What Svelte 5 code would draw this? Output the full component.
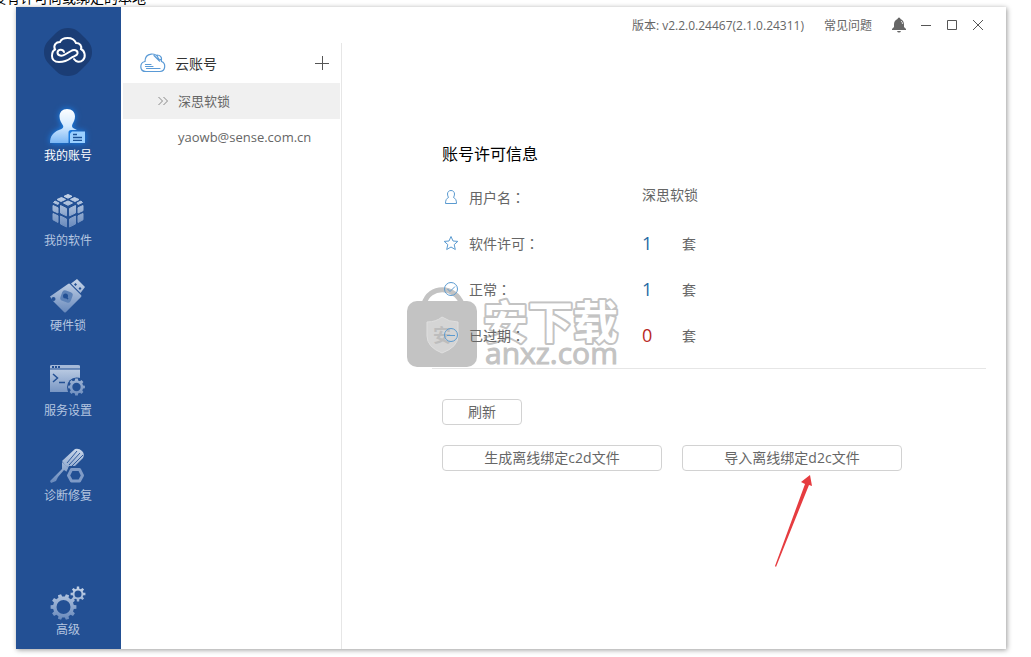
<script lang="ts">
  const nav = [
    { id: 'account', label: '我的账号' },
    { id: 'software', label: '我的软件' },
    { id: 'dongle', label: '硬件锁' },
    { id: 'service', label: '服务设置' },
    { id: 'repair', label: '诊断修复' },
  ];
  const accounts = ['深思软锁', 'yaowb@sense.com.cn'];
  const counts = [
    { icon: 'star', label: '软件许可', value: 1, late: false },
    { icon: 'check', label: '正常', value: 1, late: false },
    { icon: 'minus', label: '已过期', value: 0, late: true },
  ];
  let active = $state('account');
  let selected = $state(0);

  // Outline of a cog with square teeth around (cx, cy)
  function cog(cx: number, cy: number, outer: number, inner: number, hole: number, teeth: number) {
    const step = (Math.PI * 2) / teeth;
    let d = '';
    for (let i = 0; i < teeth; i++) {
      const a = i * step;
      for (const [k, r] of [[-0.3, inner], [-0.2, outer], [0.2, outer], [0.3, inner]]) {
        d += `${d ? 'L' : 'M'}${(cx + r * Math.cos(a + k * step)).toFixed(2)} ${(cy + r * Math.sin(a + k * step)).toFixed(2)}`;
      }
    }
    return `${d}ZM${cx + hole} ${cy}A${hole} ${hole} 0 1 0 ${cx - hole} ${cy}A${hole} ${hole} 0 1 0 ${cx + hole} ${cy}Z`;
  }
</script>

{#snippet navIcon(id: string)}
  <svg class="nav-icon" class:glow={id === 'account'} viewBox="0 0 36 36" aria-hidden="true">
    {#if id === 'account'}
      <path fill="url(#bright)" d="M17 1C22 1 25 4 25 8.500C25 12 23.500 14 22.500 16C21.500 18 22 19.500 24 20.500L27 22H21C19.500 22 18.500 23 18.500 24.500V35H0C0 28 3.500 24 9 22C12 21 14 20 13 17.500C11.500 14.500 9.500 12.500 9.500 8.500C9.500 4 12.500 1 17 1Z" />
      <path fill="#9bd0ff" d="M22 23.500H35V35H20V25.500Z" />
      <path stroke="#1c5296" stroke-width="1.300" d="M23 26.500H27M23 29.500H32M23 32.300H32" />
    {:else if id === 'software'}
      <g fill="url(#soft)" stroke="url(#soft)" stroke-width="1" stroke-linejoin="round">
        <path d="M18 1.500L22 3.300L18 5.200L14 3.300ZM11.500 4.500L15.500 6.400L11 8.500L7 6.500ZM24.500 4.500L29 6.500L25 8.500L20.500 6.400ZM18 8L22.500 10L18 12.300L13.500 10ZM5 8L9 10L8 11.500L3.500 9.500ZM31 8L32.500 9.500L28 11.500L27 10Z" />
        <path d="M3 12.500L8 14.800V20L3 17.700ZM10.500 12.500L16.500 15.500V22.800L10.500 20ZM33 12.500L28 14.800V20L33 17.700ZM25.500 12.500L19.500 15.500V22.800L25.500 20ZM3 20.500L8 22.800V29.500L3 26.800ZM10.500 23L16.500 26V34L10.500 31ZM33 20.500L28 22.800V29.500L33 26.800ZM25.500 23L19.500 26V34L25.500 31Z" />
      </g>
    {:else if id === 'dongle'}
      <path fill="url(#soft)" d="M18 6Q19 5 20 6L31 17Q32 18 31 19L16 34Q15 35 14 34L3 23L0 18.500Z" />
      <path fill="url(#soft)" fill-rule="evenodd" d="M27 1L35 9L30.500 15L21 5.500ZM25.500 5L24 6.500L25.500 8L27 6.500ZM30 9L28.500 10.500L30 12L31.500 10.500Z" />
      <circle cx="3.500" cy="21" r="2" fill="#235094" />
      <rect x="11" y="13" width="11" height="11" rx="3" transform="rotate(20 16.500 18.500)" fill="#5d82b7" />
      <circle cx="15.500" cy="18" r="2.500" fill="#235094" />
      <path stroke="#235094" stroke-width="1.500" d="M15.500 18.500L18 21" />
    {:else if id === 'service'}
      <path fill="#a6bad8" d="M0 3Q0 2 2 2H28Q30 2 30 3V5.500H0Z" />
      <path fill="#235094" d="M2 3H4V5H2ZM5 3H7V5H5ZM8 3H10V5H8Z" />
      <path fill="url(#soft)" d="M0 6.500H30V15C23 14 17 19 18 29H0Z" />
      <path fill="none" stroke="#235094" stroke-width="1.500" d="M3 11L7.500 15L3 19M9 19.500H15" />
      <circle cx="26.500" cy="24" r="9.500" fill="#235094" />
      <path fill="url(#soft)" fill-rule="evenodd" d={cog(26.5, 24, 8.5, 6.8, 4.2, 8)} />
    {:else if id === 'repair'}
      <path fill="url(#soft)" d="M25 1Q29 0 32 3Q35 6 33 10L22 21L19 20L15 17L12 13Z" />
      <path stroke="#315b9c" stroke-width="1" d="M27 3L17 15M30 5L19 17M33 7L21 19" />
      <path fill="url(#soft)" d="M12 14L21 22L17 24L14 22L8 29L6 33L1 35L0 33L5 28L12 21Z" />
      <path fill="#235094" d="M19 18H32L36 27L31 36H19L15 27Z" />
      <path fill="none" stroke="#7f9bc7" stroke-width="3" stroke-linejoin="round" d="M21.500 21.500H29.500L32.500 27.500L29.500 33H21.500L18.500 27.500Z" />
    {:else}
      <path fill="url(#soft)" fill-rule="evenodd" d={cog(13.5, 22, 13, 10.5, 7, 10)} />
      <path fill="url(#soft)" fill-rule="evenodd" d={cog(28, 9, 7.5, 5.5, 3.5, 8)} />
    {/if}
  </svg>
{/snippet}

<svg class="defs" aria-hidden="true">
  <defs>
    <linearGradient id="soft" gradientUnits="userSpaceOnUse" x1="0" y1="0" x2="0" y2="36">
      <stop offset="0" stop-color="#cbd8ea" />
      <stop offset="1" stop-color="#6486ba" />
    </linearGradient>
    <linearGradient id="bright" gradientUnits="userSpaceOnUse" x1="0" y1="0" x2="0" y2="36">
      <stop offset="0" stop-color="#ffffff" />
      <stop offset=".5" stop-color="#d4eaff" />
      <stop offset="1" stop-color="#76b4f4" />
    </linearGradient>
  </defs>
</svg>

<div class="page">
  <div class="caption"><span>没有许可尚或绑定的本地</span></div>
  <div class="window">
    <nav class="sidebar" aria-label="主菜单">
      <svg class="logo" viewBox="0 0 48 48" aria-hidden="true">
        <path fill="#1b3d75" d="M24 0C32 0 35 4 40 9C45 14 48 17 48 24C48 31 45 34 40 39C35 44 32 48 24 48C16 48 13 44 8 39C3 34 0 31 0 24C0 17 3 14 8 9C13 4 16 0 24 0Z" />
        <path fill="none" stroke="#fff" stroke-width="2" stroke-linecap="round" d="M20 24C19 21 14 21 13.500 24.500C13.500 28 18 28.500 21 26.500L27 23C30 21 34 22 33.500 25.500C33 28 30 28 27 30C23 33 20 34 15 34C10 34 8 31 8 28C8 25 9 22.500 11 21.500C9 17 12 14 16 14C18 9 29 8 32 15C36 15 38 18 37 21C41 23 42 29 39 32C36 35 32 34 30 31" />
      </svg>
      {#each nav as item (item.id)}
        <button class="nav-item" class:active={active === item.id} onclick={() => (active = item.id)}>
          {@render navIcon(item.id)}
          <span>{item.label}</span>
        </button>
      {/each}
      <button class="nav-item last" class:active={active === 'advanced'} onclick={() => (active = 'advanced')}>
        {@render navIcon('advanced')}
        <span>高级</span>
      </button>
    </nav>

    <div class="body">
      <header class="titlebar">
        <span>版本: v2.2.0.24467(2.1.0.24311)</span>
        <a href="#faq">常见问题</a>
        <div class="controls">
          <button aria-label="通知">
            <svg width="14" height="16" viewBox="0 0 14 16"><path fill="#666" d="M6 1Q7 0 8 1L8.500 2C11 3 12 5 12 7.500V10L14 12V13H0V12L2 10V7.500C2 5 3 3 5.500 2ZM5 14H9Q8.500 15.500 7 15.500T5 14Z" /><path fill="none" stroke="#ddd" d="M9 4Q10.500 5 10.500 7" /></svg>
          </button>
          <button aria-label="最小化">
            <svg width="12" height="12" viewBox="0 0 12 12"><path stroke="#555" d="M1 6.500H11" /></svg>
          </button>
          <button aria-label="最大化">
            <svg width="12" height="12" viewBox="0 0 12 12"><path fill="none" stroke="#555" d="M1.500 1.500H10.500V10.500H1.500Z" /></svg>
          </button>
          <button aria-label="关闭">
            <svg width="12" height="12" viewBox="0 0 12 12"><path stroke="#555" d="M1 1L11 11M11 1L1 11" /></svg>
          </button>
        </div>
      </header>

      <div class="columns">
        <aside class="accounts">
          <div class="accounts-head">
            <svg width="26" height="20" viewBox="0 0 26 20" fill="none" stroke="#5a9ad6" stroke-width="1.200" stroke-linecap="round" aria-hidden="true">
              <path d="M6 18.500C-1 18.500-.5 9.500 5 8.500C5-1 17-1 18.500 6C20.500 6 21.500 7 21.500 8.500C26 10 26 18 20 18.500ZM14 2.500L19.500 8M17 2C20 2 22 4 21.500 7M5.500 11.500H11M5.500 13.500H13M6.500 15.500H20" />
            </svg>
            <h2>云账号</h2>
            <button class="add" aria-label="添加账号">
              <svg width="14" height="14" viewBox="0 0 14 14"><path stroke="#555" d="M7.500 0V14M0 7.500H14" /></svg>
            </button>
          </div>
          {#each accounts as name, i}
            <button class="account" class:selected={selected === i} onclick={() => (selected = i)}>
              <svg width="10" height="10" viewBox="0 0 10 10" aria-hidden="true">
                {#if selected === i}<path fill="none" stroke="#888" d="M.5 1L4.500 5L.5 9M5.500 1L9.500 5L5.500 9" />{/if}
              </svg>
              <span>{name}</span>
            </button>
          {/each}
        </aside>

        <main>
          <h1>账号许可信息</h1>
          <dl>
            <div class="row user">
              <dt>
                <svg class="mark" viewBox="0 0 18 18" aria-hidden="true"><path d="M9 2.500C11.200 2.500 12.500 4 12.500 6C12.500 7.500 12 8.500 11.500 9.500C13.500 10.500 14.500 12 14.500 15.500H3.500C3.500 12 4.500 10.500 6.500 9.500C6 8.500 5.500 7.500 5.500 6C5.500 4 6.800 2.500 9 2.500Z" /></svg>
                用户名<i>：</i>
              </dt>
              <dd>深思软锁</dd>
            </div>
            {#each counts as c}
              <div class="row">
                <dt>
                  <svg class="mark" viewBox="0 0 18 18" aria-hidden="true">
                    {#if c.icon === 'star'}
                      <path d="M9 2.500L11 7L15.800 7.400L12.200 10.600L13.300 15.500L9 13L4.700 15.500L5.800 10.600L2.200 7.400L7 7Z" />
                    {:else}
                      <circle cx="9" cy="9" r="6.500" />
                      <path d={c.icon === 'check' ? 'M5.500 9L8 11.500L13 6.500' : 'M5 9.500H13'} />
                    {/if}
                  </svg>
                  {c.label}<i>：</i>
                </dt>
                <dd><strong class:late={c.late}>{c.value}</strong><span>套</span></dd>
              </div>
            {/each}
          </dl>
          <hr />
          <div class="actions">
            <button class="small">刷新</button>
            <div class="pair">
              <button>生成离线绑定c2d文件</button>
              <button>导入离线绑定d2c文件
                <svg class="arrow" width="38" height="94" viewBox="0 0 38 94" aria-hidden="true"><path fill="#e63c40" d="M36 1L38 12L35 11L2 93L1 92L31 10L27 8Z" /></svg>
              </button>
            </div>
          </div>
          <svg class="watermark" width="216" height="84" viewBox="0 0 216 84" aria-hidden="true">
            <path fill="none" stroke="#c3c3c3" stroke-width="5" d="M18 18C23-1 49-1 56 18" />
            <rect x="1" y="15" width="70" height="66" rx="10" fill="#c3c3c3" />
            <path fill="#d5d5d5" stroke="#dfdfdf" d="M36 31Q43 36 52 36V50Q52 61 36 67Q21 61 21 50V36Q30 36 36 31Z" />
            <text x="27" y="56" font-size="18" font-weight="700" fill="#bdbdbd">安</text>
            <g font-size="45" font-weight="700" stroke-linejoin="round">
              <text x="77" y="53" fill="#c3c3c3" stroke="#c3c3c3" stroke-width="4">安下载</text>
              <text x="77" y="53" fill="#fff">安下载</text>
            </g>
            <text class="site" x="79" y="78" font-size="30" fill="#c3c3c3" stroke="#c3c3c3">anxz.com</text>
          </svg>
        </main>
      </div>
    </div>
  </div>
</div>

<style>
  :global(body) { margin: 0; background: #fff; }
  * { box-sizing: border-box; }
  button { font: inherit; color: inherit; border: 0; padding: 0; background: none; cursor: pointer; }
  svg { display: block; flex: none; }
  h1, h2, dl, dd { margin: 0; font-weight: 400; }
  .defs { position: absolute; width: 0; height: 0; }
  .page {
    display: flex; flex-direction: column; min-height: 100vh; padding: 0 25px 8px 16px; overflow: hidden;
    font-family: "Open Sans", "Noto Sans CJK SC", sans-serif; font-size: 14px; color: #666;
  }
  .caption { display: flex; align-items: flex-end; height: 7px; margin-left: -24px; overflow: hidden; font-size: 14px; line-height: 18px; color: #000; white-space: nowrap; }
  .window { flex: 1; display: flex; background: #fff; box-shadow: 1px 1px 5px rgba(0, 0, 0, .4); }
  .sidebar { display: flex; flex-direction: column; align-items: center; width: 105px; padding: 21px 1px 10px 0; background: #235094; }
  .logo { width: 48px; height: 48px; margin-bottom: 32px; }
  .nav-item { display: flex; flex-direction: column; align-items: center; gap: 3px; width: 100%; height: 57px; margin-bottom: 28px; font-size: 12px; line-height: 18px; color: #b5c6e0; }
  .nav-item.active { color: #fff; }
  .nav-item.last { gap: 0; height: 54px; margin: auto 0 0; }
  .nav-icon { width: 36px; height: 36px; }
  .glow { filter: drop-shadow(0 0 3px #1686f5); }
  .body { flex: 1; display: flex; flex-direction: column; min-width: 0; }
  .titlebar { display: flex; justify-content: flex-end; align-items: center; gap: 20px; height: 36px; padding-right: 22px; font-size: 12px; }
  .titlebar a { color: inherit; text-decoration: none; }
  .controls { display: flex; align-items: center; gap: 14px; }
  .columns { flex: 1; display: flex; }
  .accounts { width: 221px; padding-left: 2px; border-right: 1px solid #e6e6e6; }
  .accounts-head { display: flex; align-items: center; gap: 9px; height: 40px; padding: 0 12px 0 17px; color: #333; }
  h2 { font-size: 14px; }
  .add { margin-left: auto; }
  .account { display: flex; align-items: center; gap: 10px; width: 217px; height: 36px; padding-left: 35px; font-size: 13px; }
  .account span { line-height: 18px; }
  .account.selected { background: #f0f0f0; }
  main { position: relative; isolation: isolate; flex: 1; padding: 99px 20px 0 90px; }
  h1 { padding-left: 10px; font-size: 16px; line-height: 24px; color: #000; }
  dl { padding: 8px 0 10px 10px; }
  .row { display: flex; align-items: center; height: 46px; }
  dt { display: flex; align-items: center; width: 200px; }
  dt i { font-family: "Noto Sans CJK TC", sans-serif; font-style: normal; }
  dd { display: flex; align-items: center; }
  .user dd { padding-bottom: 6px; }
  .mark { width: 18px; height: 18px; margin-right: 9px; fill: none; stroke: #5a9ad0; stroke-width: 1; }
  strong { width: 40px; font-size: 18px; font-weight: 400; color: #1f6aa5; }
  strong.late { color: #b8281e; }
  hr { margin: 0; border: 0; border-top: 1px solid #e6e6e6; }
  .actions { display: flex; flex-direction: column; align-items: flex-start; gap: 20px; padding: 30px 0 0 10px; }
  .pair { display: flex; gap: 20px; }
  .actions button { position: relative; width: 220px; height: 26px; border: 1px solid #d2d2d2; border-radius: 4px; background: #fff; line-height: 22px; }
  .actions .small { width: 80px; }
  .arrow { position: absolute; left: 91px; top: 28px; pointer-events: none; }
  .watermark { position: absolute; z-index: -1; left: 64px; top: 243px; pointer-events: none; font-family: "Noto Sans CJK SC", sans-serif; }
  .site { font-family: "Open Sans", sans-serif; }
</style>
